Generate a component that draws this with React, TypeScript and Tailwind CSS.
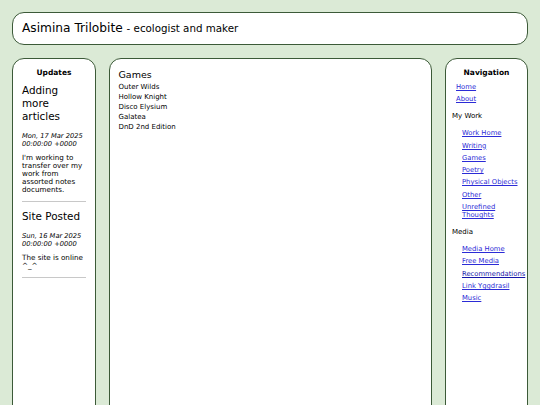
import React from "react";

type NavItem = { label: string; current?: boolean };

const workLinks: NavItem[] = [
  { label: "Work Home" },
  { label: "Writing" },
  { label: "Games" },
  { label: "Poetry" },
  { label: "Physical Objects" },
  { label: "Other" },
  { label: "Unrefined Thoughts" },
];

const mediaLinks: NavItem[] = [
  { label: "Media Home" },
  { label: "Free Media" },
  { label: "Recommendations", current: true },
  { label: "Link Yggdrasil" },
  { label: "Music" },
];

const games = ["Outer Wilds", "Hollow Knight", "Disco Elysium", "Galatea", "DnD 2nd Edition"];

const posts = [
  {
    title: "Adding more articles",
    date: "Mon, 17 Mar 2025 00:00:00 +0000",
    body: "I'm working to transfer over my work from assorted notes documents.",
  },
  {
    title: "Site Posted",
    date: "Sun, 16 Mar 2025 00:00:00 +0000",
    body: "The site is online ^_^",
  },
];

const panel = "rounded-[12px] border-[1.5px] border-[#3c5a38] bg-white";

function NavLink({ item }: { item: NavItem }) {
  return (
    <li className="mb-[4.3px] leading-[8px]">
      <a
        href="#"
        className={`underline ${item.current ? "text-[#1414a8]" : "text-[#2b2bd6]"}`}
      >
        {item.label}
      </a>
    </li>
  );
}

export default function App() {
  return (
    <div className="h-[405px] overflow-hidden bg-[#dbead6] p-3 font-['DejaVu_Sans',sans-serif] text-black">
      <header className={`${panel} flex h-[33px] items-center px-[9px]`}>
        <h1 className="text-[12.2px] leading-none">
          Asimina Trilobite <span className="text-[10.3px]">- ecologist and maker</span>
        </h1>
      </header>

      <div className="mt-[13px] grid grid-cols-[84px_1fr_83px] gap-[13px]">
        {/* updates feed */}
        <aside className={`${panel} h-[360px] px-[9px] pt-[9px]`}>
          <h2 className="text-center text-[7.5px] font-bold leading-[9px]">Updates</h2>
          {posts.map((p, i) => (
            <article key={p.title} className="border-b border-[#c8c8c8] pb-[6.5px]">
              <h3 className={`${i === 0 ? "mt-[7px]" : "mt-[7.5px]"} text-[10.4px] leading-[13px]`}>
                {p.title}
              </h3>
              <p className={`${i === 0 ? "mt-[8.5px]" : "mt-[9.5px]"} text-[6.7px] italic leading-[8px]`}>
                {p.date}
              </p>
              <p className="mt-[6px] text-[7.2px] leading-[8.2px]">{p.body}</p>
            </article>
          ))}
        </aside>

        {/* main content */}
        <main className={`${panel} h-[360px] pl-[8.5px] pr-[9px] pt-[10px]`}>
          <h2 className="text-[9.5px] leading-[12px]">Games</h2>
          <ul className="mt-[1px] text-[7px] leading-[10px]">
            {games.map((g) => (
              <li key={g}>{g}</li>
            ))}
          </ul>
        </main>

        {/* site navigation */}
        <nav className={`${panel} h-[360px] pt-[9px] text-[6.8px]`}>
          <h2 className="text-center text-[7.5px] font-bold leading-[9px]">Navigation</h2>
          <ul className="mt-[6px] pl-[10px]">
            <NavLink item={{ label: "Home" }} />
            <NavLink item={{ label: "About" }} />
          </ul>
          <p className="mt-[9px] pl-[6px] text-[7px] leading-[8px]">My Work</p>
          <ul className="mt-[9px] pl-[16px]">
            {workLinks.map((l) => (
              <NavLink key={l.label} item={l} />
            ))}
          </ul>
          <p className="mt-[9px] pl-[6px] text-[7px] leading-[8px]">Media</p>
          <ul className="mt-[9px] pl-[16px]">
            {mediaLinks.map((l) => (
              <NavLink key={l.label} item={l} />
            ))}
          </ul>
        </nav>
      </div>
    </div>
  );
}
